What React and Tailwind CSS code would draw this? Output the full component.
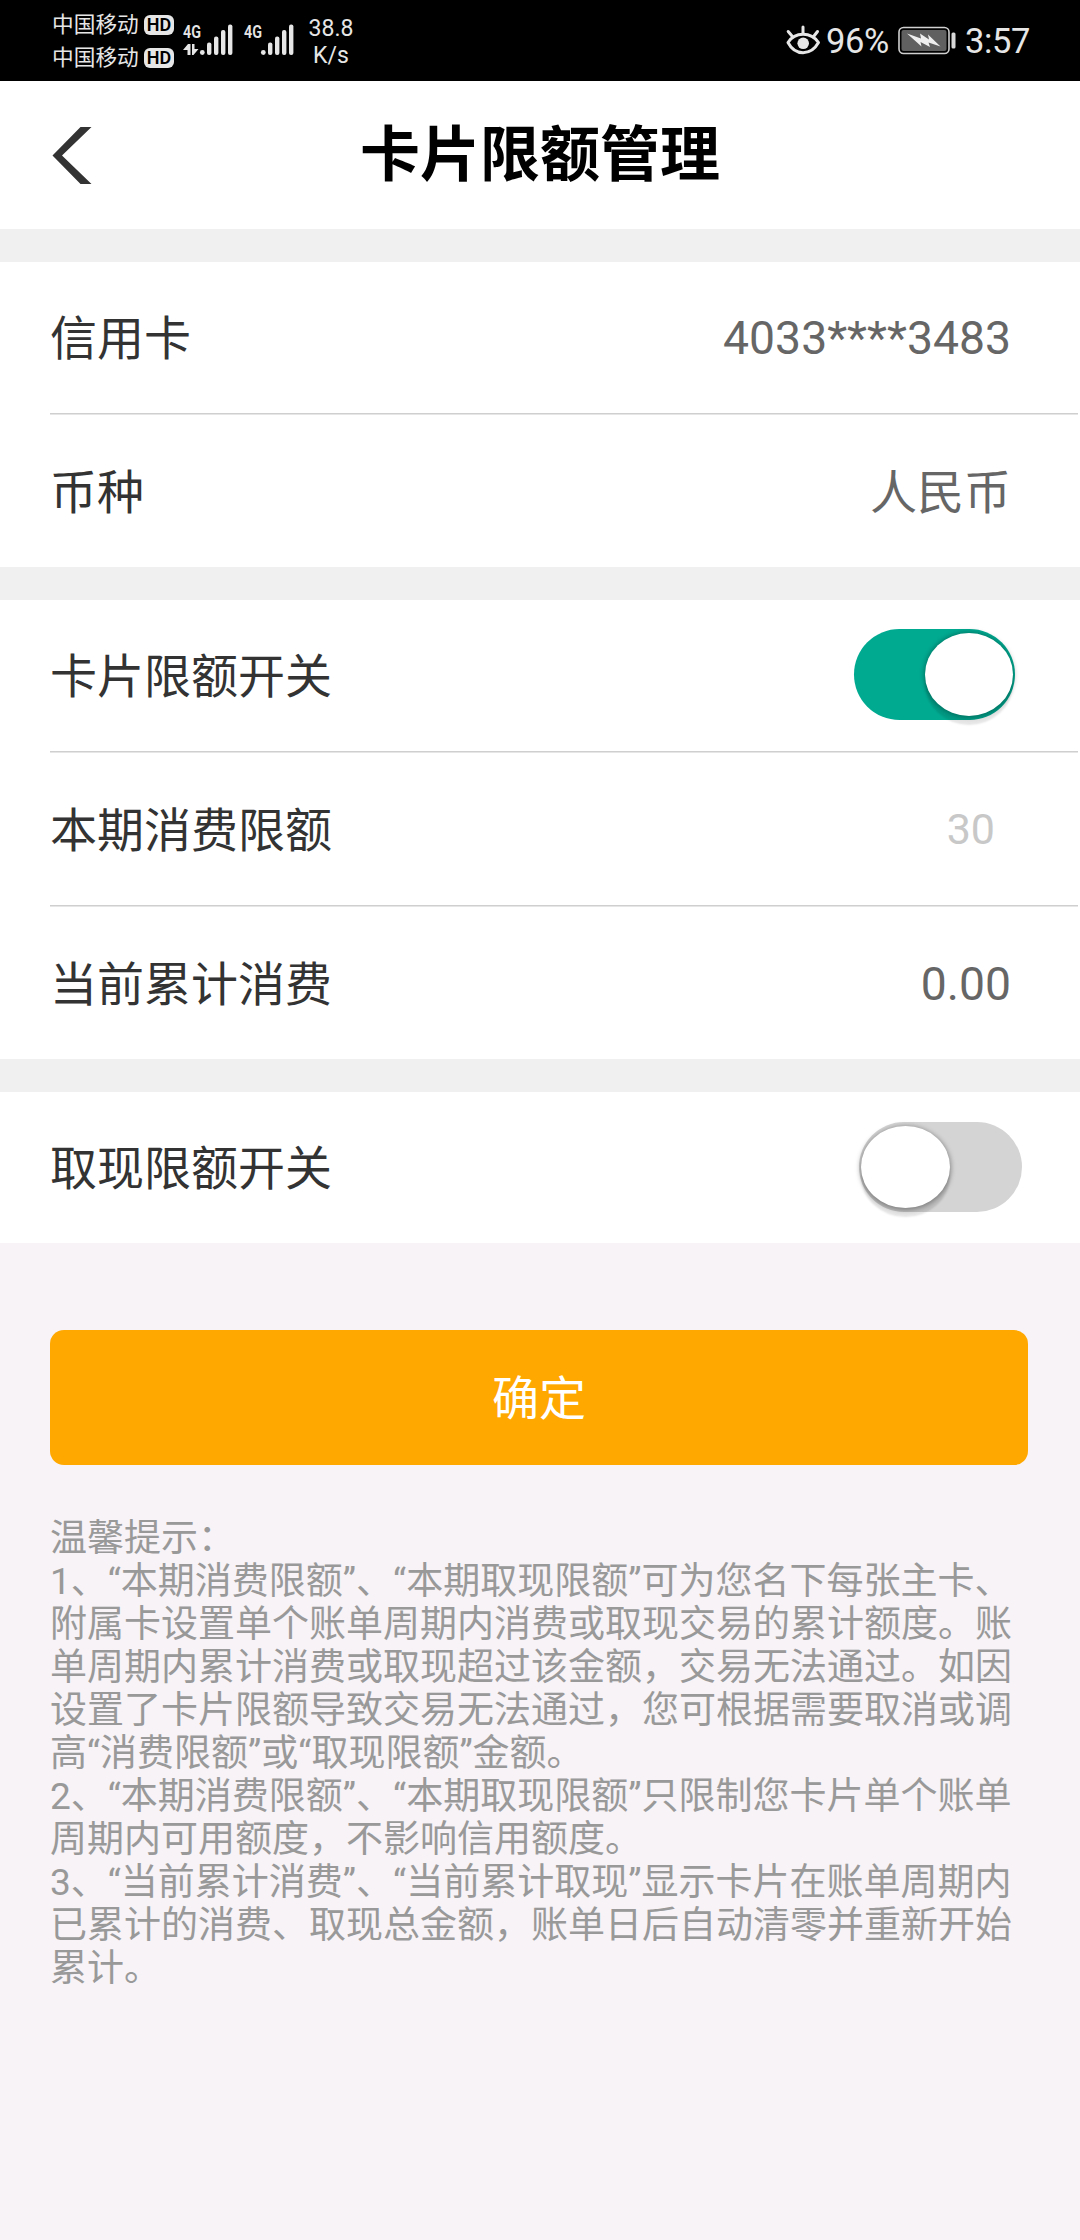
import React from "react";

const FONT = "font-['Roboto','Noto_Sans_CJK_SC',sans-serif]";

function Carrier() {
  return (
    <div className="flex h-[33px] items-center">
      <span className="w-[92px] text-[21.7px] leading-[33px]">中国移动</span>
      <span className="flex h-[20px] w-[30px] items-center justify-center rounded-[6px] bg-[#e6e6e6] text-[18px] font-semibold leading-[20px] text-black">
        HD
      </span>
    </div>
  );
}

function Signal({ data }) {
  return (
    <div className="flex h-[32px] w-[51px] flex-col">
      <svg className="h-[32px] w-[51px] overflow-visible" viewBox="0 0 51 32" fill="#e6e6e6">
        <text
          x="0"
          y="14"
          fontSize="18.5"
          fontWeight="600"
          textLength="18"
          lengthAdjust="spacingAndGlyphs"
          fontFamily="Roboto, sans-serif"
        >
          4G
        </text>
        {data && (
          <g>
            <path d="M0 26 L5 20 H7.5 V31 H4.5 V26 Z" />
            <path d="M9 20 H11.5 V25 H15.5 L10.5 31 H9 Z" />
          </g>
        )}
        <circle cx="19.3" cy="28.5" r="2.4" />
        <rect x="24" y="18.5" width="4.4" height="12.5" rx="2" />
        <rect x="31" y="12.5" width="4.4" height="18.5" rx="2" />
        <rect x="38" y="6" width="4.4" height="25" rx="2" />
        <rect x="45" y="0.5" width="4.4" height="30.5" rx="2" />
      </svg>
    </div>
  );
}

function EyeIcon() {
  return (
    <svg className="mt-[25px] h-[32px] w-[35px]" viewBox="0 0 35 32" fill="none" stroke="#e6e6e6" strokeLinecap="round">
      <path d="M2 17.5 C9 6.5 25 6.5 32.5 17.5 C25 31 9 31 2 17.5 Z" strokeWidth="3" strokeLinejoin="round" />
      <circle cx="17.2" cy="18.3" r="5.8" fill="#e6e6e6" stroke="none" />
      <path d="M17 2 V8 M2.2 6.5 L6 11 M31.5 6.5 L28 11" strokeWidth="3" />
    </svg>
  );
}

function BatteryIcon() {
  return (
    <svg className="mt-[26px] h-[30px] w-[60px]" viewBox="0 0 60 30">
      <rect x="1" y="1.5" width="50" height="26" rx="4.5" fill="none" stroke="#d0d0d0" strokeWidth="1.6" />
      <rect x="3.5" y="4" width="45" height="21" rx="2" fill="#606060" />
      <path d="M9 7.5 L23 12.5 L22 7.5 L31 13.5 L30 8.5 L42.5 20.5 L30.5 16.5 L32 21 L22.5 16 L23.5 20.5 Z" fill="#eeeeee" />
      <rect x="53.5" y="6.5" width="4" height="16" rx="1.5" fill="#d8d8d8" />
    </svg>
  );
}

function StatusBar() {
  return (
    <div className="flex h-[81px] items-start bg-black text-[#e6e6e6]">
      <div className="ml-[52px] mt-[8px] flex w-[131px] flex-col">
        <Carrier />
        <Carrier />
      </div>
      <div className="mt-[24px] flex gap-[10px]">
        <Signal data />
        <Signal />
      </div>
      <div className="ml-[11px] mt-[15px] flex w-[50px] flex-col text-center text-[23px] leading-[27px]">
        <span>38.8</span>
        <span>K/s</span>
      </div>
      <div className="ml-auto flex w-[294px] items-start">
        <EyeIcon />
        <span className="ml-[5px] mt-[21px] w-[72px] text-[34.5px] leading-[41px] tracking-[-0.4px]">96%</span>
        <BatteryIcon />
        <span className="ml-[7px] mt-[21px] text-[34.5px] leading-[41px] tracking-[-0.4px]">3:57</span>
      </div>
    </div>
  );
}

function Header() {
  return (
    <div className="grid h-[148px] grid-cols-[200px_1fr_200px] items-center bg-white">
      <svg className="ml-[52px] mt-[1px] h-[57px] w-[40px]" viewBox="0 0 40 57" fill="#333333">
        <path d="M28.5 0 H39.5 L10 28.5 L39.5 57 H28.5 L0.5 28.5 Z" />
      </svg>
      <h1 className="pt-[2px] text-center text-[60px] font-bold leading-[80px] text-black">卡片限额管理</h1>
    </div>
  );
}

function Row({ label, first, children }) {
  return (
    <div className={`flex items-center justify-between pl-[50px] ${first ? "h-[151px]" : "h-[152px]"}`}>
      <span className="pt-[3px] text-[47px] leading-[60px] text-[#333333]">{label}</span>
      {children}
    </div>
  );
}

function Divider() {
  return <div className="ml-[50px] mr-[2px] h-[2px] border-b border-t border-b-[#e6e6e6] border-t-[#cfcfcf]" />;
}

function SwitchOn() {
  return (
    <div className="mr-[65px] mt-[-3px] flex h-[91px] w-[161px] items-center justify-end rounded-full bg-[#00aa91] pr-[2px]">
      <div className="h-[83px] w-[88px] rounded-[50%] bg-white shadow-[0_0_5px_1px_rgba(0,0,0,0.3),0_9px_2px_0px_rgba(0,0,0,0.1)]" />
    </div>
  );
}

function SwitchOff() {
  return (
    <div className="mr-[58px] mt-[-1px] flex h-[90px] w-[163px] items-center rounded-full bg-[#d4d4d4] pl-[2px]">
      <div className="h-[82px] w-[89px] rounded-[50%] bg-white shadow-[0_1px_5px_1px_rgba(0,0,0,0.35),0_9px_2px_0px_rgba(0,0,0,0.1)]" />
    </div>
  );
}

const NOTES = [
  "温馨提示：",
  "1、“本期消费限额”、“本期取现限额”可为您名下每张主卡、",
  "附属卡设置单个账单周期内消费或取现交易的累计额度。账",
  "单周期内累计消费或取现超过该金额，交易无法通过。如因",
  "设置了卡片限额导致交易无法通过，您可根据需要取消或调",
  "高“消费限额”或“取现限额”金额。",
  "2、“本期消费限额”、“本期取现限额”只限制您卡片单个账单",
  "周期内可用额度，不影响信用额度。",
  "3、“当前累计消费”、“当前累计取现”显示卡片在账单周期内",
  "已累计的消费、取现总金额，账单日后自动清零并重新开始",
  "累计。",
];

export default function App() {
  return (
    <div lang="zh-CN" className={`${FONT} h-[2240px] w-[1080px] overflow-hidden bg-[#f7f3f7]`}>
      <StatusBar />
      <Header />
      <div className="flex flex-col gap-[33px] bg-[#f0f0f0] pt-[33px]">
        <section className="h-[305px] bg-white">
          <Row label="信用卡" first>
            <span className="mr-[69px] text-[46.3px] leading-[60px] text-[#666666]">4033****3483</span>
          </Row>
          <Divider />
          <Row label="币种">
            <span className="mr-[69px] pt-[3px] text-[47px] leading-[60px] text-[#666666]">人民币</span>
          </Row>
        </section>
        <section className="h-[459px] bg-white">
          <Row label="卡片限额开关" first>
            <SwitchOn />
          </Row>
          <Divider />
          <Row label="本期消费限额">
            <span className="mr-[85px] text-[43px] leading-[60px] text-[#c8c8c8]">30</span>
          </Row>
          <Divider />
          <Row label="当前累计消费">
            <span className="mr-[69px] pt-[1px] text-[46.3px] leading-[60px] text-[#666666]">0.00</span>
          </Row>
        </section>
        <section className="h-[151px] bg-white">
          <Row label="取现限额开关" first>
            <SwitchOff />
          </Row>
        </section>
      </div>
      <button className="ml-[50px] mt-[87px] flex h-[135px] w-[978px] items-center justify-center rounded-[14px] bg-[#ffa800] pt-[2px] text-[47px] leading-[60px] text-white">
        确定
      </button>
      <div className="ml-[50px] mt-[52px] text-[37px] leading-[43px] text-[#999999]">
        {NOTES.map((line) => (
          <p key={line} className="whitespace-nowrap">
            {line}
          </p>
        ))}
      </div>
    </div>
  );
}
